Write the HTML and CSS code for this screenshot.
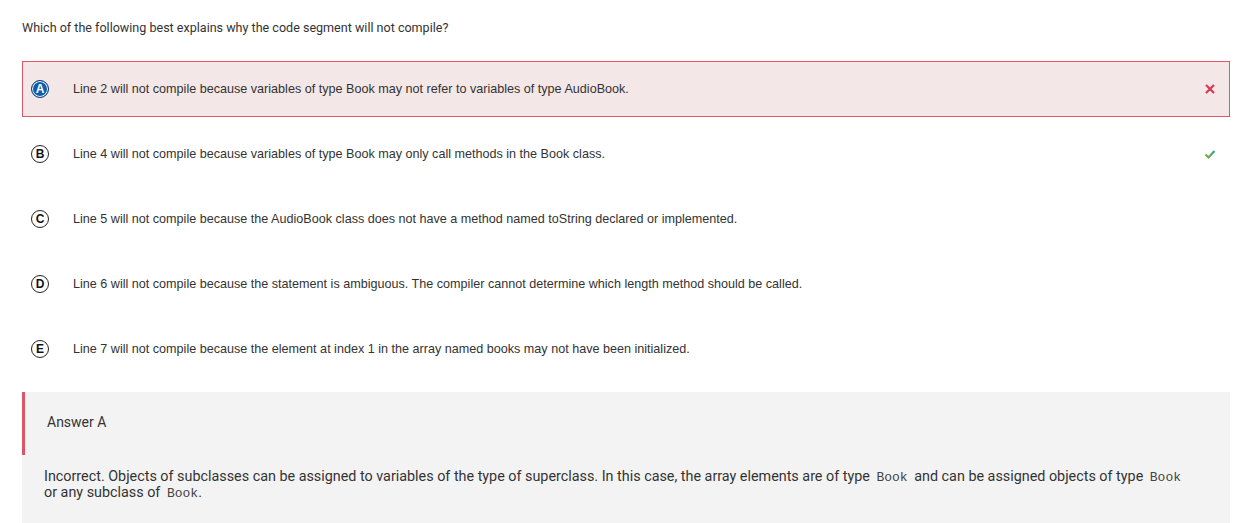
FILE: index.html
```html
<!DOCTYPE html>
<html>
<head>
<meta charset="utf-8">
<link rel="stylesheet" href="styles.css">
</head>
<body>
<div class="page">
  <p class="question">Which of the following best explains why the code segment will not compile?</p>
  <ul class="options">
    <li class="option wrong">
      <span class="badge selected">A</span>
      <span class="text">Line 2 will not compile because variables of type Book may not refer to variables of type AudioBook.</span>
      <svg class="mark" width="12" height="12" viewBox="0 0 12 12"><path d="M2 2 L10 10 M10 2 L2 10" stroke="#d23a55" stroke-width="2.2" fill="none"/></svg>
    </li>
    <li class="option">
      <span class="badge">B</span>
      <span class="text">Line 4 will not compile because variables of type Book may only call methods in the Book class.</span>
      <svg class="mark" width="12" height="12" viewBox="0 0 12 12"><defs><linearGradient id="g" x1="0" y1="1" x2="1" y2="0"><stop offset="0" stop-color="#8aa82a"/><stop offset="1" stop-color="#2fa6a0"/></linearGradient></defs><path d="M1.5 6.5 L4.5 9.5 L10.5 3" stroke="url(#g)" stroke-width="2.2" fill="none"/></svg>
    </li>
    <li class="option">
      <span class="badge">C</span>
      <span class="text">Line 5 will not compile because the AudioBook class does not have a method named toString declared or implemented.</span>
    </li>
    <li class="option">
      <span class="badge">D</span>
      <span class="text">Line 6 will not compile because the statement is ambiguous. The compiler cannot determine which length method should be called.</span>
    </li>
    <li class="option">
      <span class="badge">E</span>
      <span class="text">Line 7 will not compile because the element at index 1 in the array named books may not have been initialized.</span>
    </li>
  </ul>
  <section class="answer">
    <div class="answer-head">Answer A</div>
    <p class="explain">Incorrect. Objects of subclasses can be assigned to variables of the type of superclass. In this case, the array elements are of type <code class="pad">Book</code> and can be assigned objects of type <code class="pad">Book</code> or any subclass of <code>Book</code>.</p>
  </section>
</div>
</body>
</html>
```
FILE: styles.css
```css
html, body {
  margin: 0;
  padding: 0;
  background: #fff;
}
.page {
  padding: 0 20px 0 22px;
}
.question {
  margin: 0;
  padding-top: 20px;
  font-family: Roboto, "Liberation Sans", sans-serif;
  font-size: 12.55px;
  line-height: 16px;
  color: #333;
}
.options {
  list-style: none;
  margin: 25px 0 0 0;
  padding: 0;
}
.option {
  display: flex;
  align-items: center;
  height: 56px;
  box-sizing: border-box;
  border: 1px solid transparent;
  padding: 0 13px 0 8px;
  margin-bottom: 9px;
  font-family: "Liberation Sans", Arial, sans-serif;
  font-size: 12.6px;
  color: #333;
}
.option.wrong {
  background: #f3e7e7;
  border-color: #e0576a;
}
.badge {
  flex: none;
  width: 16px;
  height: 16px;
  border: 1.5px solid #222;
  border-radius: 50%;
  display: flex;
  align-items: center;
  justify-content: center;
  font-weight: bold;
  font-size: 12px;
  color: #111;
  background: #fff;
}
.badge.selected {
  background: #0f5cad;
  border-color: #0a3f80;
  color: #fff;
  box-shadow: inset 0 0 0 1px #fff;
}
.text {
  flex: 1;
  margin-left: 24px;
}
.mark {
  flex: none;
}
.options .option:last-child {
  margin-bottom: 15px;
}
.answer {
  background: #f3f3f3;
  padding-bottom: 24px;
}
.answer-head {
  height: 63px;
  box-sizing: border-box;
  border-left: 3px solid #e05469;
  padding: 22px 0 0 22px;
  font-family: Roboto, "Liberation Sans", sans-serif;
  font-size: 14px;
  line-height: 16px;
  color: #333;
}
.explain {
  margin: 0;
  padding: 14px 40px 0 22px;
  font-family: Roboto, "Liberation Sans", sans-serif;
  font-size: 14.35px;
  line-height: 16px;
  color: #333;
}
.explain code {
  font-family: "Liberation Mono", "Courier New", monospace;
  font-size: 13px;
  line-height: 1;
  color: #444;
  padding-left: 3px;
}
.explain code.pad {
  padding-right: 3px;
}
```
